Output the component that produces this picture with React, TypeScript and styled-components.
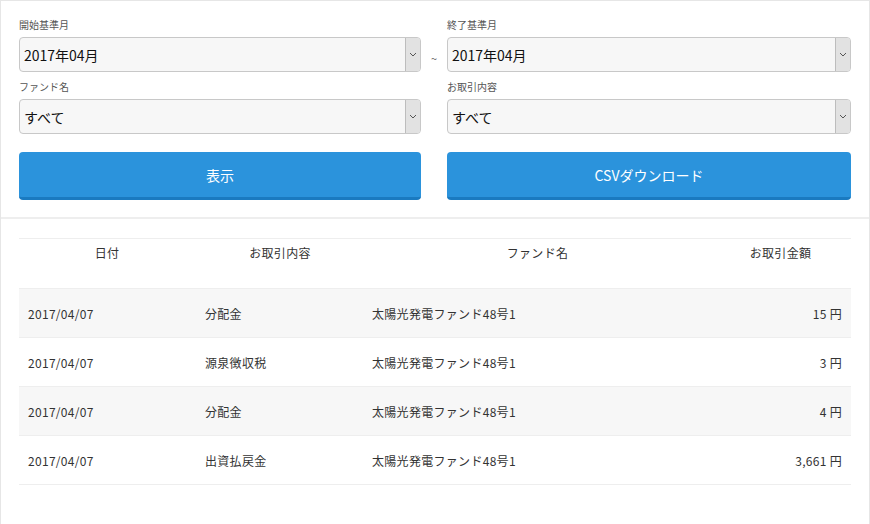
import React from "react";
import styled, { createGlobalStyle } from "styled-components";

const G = createGlobalStyle`
  html,body{margin:0;padding:0;background:#fff;}
  body{font-family:"Noto Sans CJK JP","Liberation Sans",sans-serif;color:#333;}
`;
const Page = styled.div`
  width:870px;height:524px;box-sizing:border-box;border:1px solid #e6e6e6;border-bottom:none;
`;
const Filters = styled.div`
  display:grid;grid-template-columns:402px 26px 404px;padding:9px 17px 17px 18px;border-bottom:2px solid #eeeeee;
`;
const Field = styled.div`display:flex;flex-direction:column;`;
const Label = styled.div`font-size:10px;color:#555;height:27px;line-height:30px;`;
const Select = styled.div`
  height:35px;box-sizing:border-box;border:1px solid #c8c8c8;border-radius:4px;background:#f7f7f7;
  display:flex;align-items:center;font-size:14px;color:#111;overflow:hidden;
`;
const Val = styled.div`flex:1;padding-left:4px;`;
const Arrow = styled.div`
  width:14px;height:100%;background:#e2e2e2;border-left:1px solid #bdbdbd;display:flex;align-items:center;justify-content:center;
`;
const Tilde = styled.div`display:flex;align-items:flex-end;justify-content:center;padding-bottom:6px;font-size:11px;color:#666;`;
const Spacer = styled.div``;
const Button = styled.div`
  margin-top:18px;height:48px;box-sizing:border-box;border-radius:4px;background:#2b93dc;border-bottom:3px solid #1a7ac0;
  color:#fff;font-size:14px;display:flex;align-items:center;justify-content:center;
`;
const Table = styled.div`margin:19px 18px 0 18px;border-top:1px solid #eee;`;
const Row = styled.div<{ $stripe?: boolean; $head?: boolean }>`
  display:grid;grid-template-columns:176px 170px 345px 141px;height:${p => p.$head ? 49 : 49}px;
  align-items:${p => p.$head ? "start" : "center"};padding-top:${p => p.$head ? 5 : 0}px;box-sizing:border-box;
  ${p => p.$head ? "height:50px;" : ""}
  font-size:12px;color:#333;border-bottom:1px solid #eee;
  background:${p => p.$stripe ? "#f7f7f7" : "#fff"};
`;
const Cell = styled.div<{ $align?: string; $pad?: number }>`
  text-align:${p => p.$align || "left"};padding-left:${p => p.$pad ?? 0}px;padding-right:${p => p.$align === "right" ? 9 : 0}px;letter-spacing:0.3px;
`;
const Chev = () => (
  <svg width="8" height="5" viewBox="0 0 8 5"><path d="M1 1l3 3 3-3" fill="none" stroke="#555" strokeWidth="1" /></svg>
);
const Sel = ({ v }: { v: string }) => (
  <Select><Val>{v}</Val><Arrow><Chev /></Arrow></Select>
);
const data = [
  ["2017/04/07", "分配金", "太陽光発電ファンド48号1", "15 円"],
  ["2017/04/07", "源泉徴収税", "太陽光発電ファンド48号1", "3 円"],
  ["2017/04/07", "分配金", "太陽光発電ファンド48号1", "4 円"],
  ["2017/04/07", "出資払戻金", "太陽光発電ファンド48号1", "3,661 円"],
];
export default function App() {
  return (
    <Page>
      <G />
      <Filters>
        <Field><Label>開始基準月</Label><Sel v="2017年04月" /></Field>
        <Tilde>~</Tilde>
        <Field><Label>終了基準月</Label><Sel v="2017年04月" /></Field>
        <Field><Label>ファンド名</Label><Sel v="すべて" /></Field>
        <Spacer />
        <Field><Label>お取引内容</Label><Sel v="すべて" /></Field>
        <Button>表示</Button>
        <Spacer />
        <Button>CSVダウンロード</Button>
      </Filters>
      <Table>
        <Row $head>
          <Cell $align="center">日付</Cell>
          <Cell $align="center">お取引内容</Cell>
          <Cell $align="center">ファンド名</Cell>
          <Cell $align="center">お取引金額</Cell>
        </Row>
        {data.map((r, i) => (
          <Row key={i} $stripe={i % 2 === 0}>
            <Cell $pad={9}>{r[0]}</Cell>
            <Cell $pad={10}>{r[1]}</Cell>
            <Cell $pad={7}>{r[2]}</Cell>
            <Cell $align="right">{r[3]}</Cell>
          </Row>
        ))}
      </Table>
    </Page>
  );
}
